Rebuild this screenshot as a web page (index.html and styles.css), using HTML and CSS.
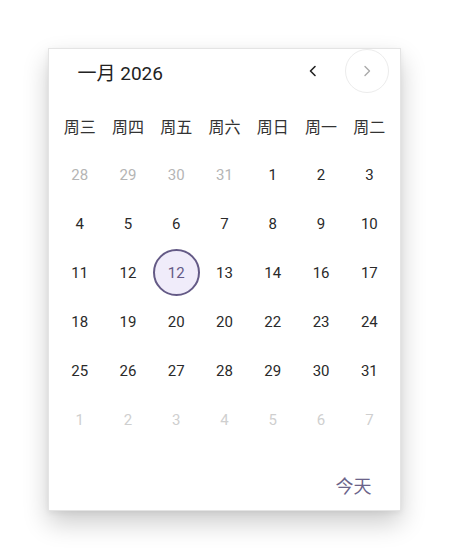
FILE: index.html
```html
<!DOCTYPE html>
<html lang="zh">
<head>
    <meta charset="UTF-8" />
    <meta name="viewport" content="width=device-width, initial-scale=1.0" />
    <title>日历</title>
    <link rel="stylesheet" href="styles.css">
</head>
<body>
    <div class="picker">
        <div class="header">
            <span class="title">一月 2026</span>
            <button class="nav prev" aria-label="上个月">
                <svg width="14" height="14" viewBox="0 0 14 14"><path d="M9 2.5 L4.5 7 L9 11.5" fill="none" stroke="#222" stroke-width="1.6" stroke-linecap="round" stroke-linejoin="round"/></svg>
            </button>
            <button class="nav next" aria-label="下个月">
                <svg width="14" height="14" viewBox="0 0 14 14"><path d="M5 2.5 L9.5 7 L5 11.5" fill="none" stroke="#aaa" stroke-width="1.4" stroke-linecap="round" stroke-linejoin="round"/></svg>
            </button>
        </div>

        <div class="weekdays">
            <span>周三</span><span>周四</span><span>周五</span><span>周六</span><span>周日</span><span>周一</span><span>周二</span>
        </div>

        <div class="days">
            <span class="other">28</span><span class="other">29</span><span class="other">30</span><span class="other">31</span><span>1</span><span>2</span><span>3</span>
            <span>4</span><span>5</span><span>6</span><span>7</span><span>8</span><span>9</span><span>10</span>
            <span>11</span><span>12</span><span class="selected">12</span><span>13</span><span>14</span><span>16</span><span>17</span>
            <span>18</span><span>19</span><span>20</span><span>20</span><span>22</span><span>23</span><span>24</span>
            <span>25</span><span>26</span><span>27</span><span>28</span><span>29</span><span>30</span><span>31</span>
            <span class="next-month">1</span><span class="next-month">2</span><span class="next-month">3</span><span class="next-month">4</span><span class="next-month">5</span><span class="next-month">6</span><span class="next-month">7</span>
        </div>

        <div class="footer">
            <button class="today">今天</button>
        </div>
    </div>
</body>
</html>
```

FILE: styles.css
```css
body {
    margin: 0;
    padding: 48px 0 0 48px;
    min-height: 560px;
    box-sizing: border-box;
    background: #fff;
    font-family: Roboto, "Noto Sans CJK SC", sans-serif;
    color: #222;
}
.picker {
    width: 353px;
    height: 463px;
    box-sizing: border-box;
    border: 1px solid #e4e4e4;
    background: #fff;
    box-shadow: 0 12px 24px rgba(0,0,0,0.2), 0 2px 6px rgba(0,0,0,0.06);
    padding: 0 6.5px;
    display: flex;
    flex-direction: column;
}
.header {
    display: flex;
    align-items: center;
    height: 48px;
    padding: 0 5px 4px 22px;
    box-sizing: border-box;
}
.title {
    flex: 1;
    font-size: 19px;
    color: #222;
}
.nav {
    width: 44px;
    height: 44px;
    flex-shrink: 0;
    border-radius: 50%;
    border: none;
    background: none;
    padding: 0;
    display: flex;
    align-items: center;
    justify-content: center;
}
.prev {
    margin-right: 10px;
}
.next {
    border: 1px solid #ececec;
}
.weekdays,
.days {
    display: grid;
    grid-template-columns: repeat(7, 1fr);
}
.weekdays {
    height: 48px;
    margin-top: 5px;
    align-items: center;
    font-size: 16px;
    color: #333;
    text-align: center;
}
.days {
    grid-auto-rows: 49px;
    font-size: 15px;
    color: #2a2a2a;
}
.days span {
    display: flex;
    align-items: center;
    justify-content: center;
}
.days .other { color: #b5b5b5; }
.days .next-month { color: #cfcfcf; }
.days .selected {
    width: 43px;
    height: 43px;
    justify-self: center;
    align-self: center;
    border: 2px solid #645a86;
    border-radius: 50%;
    background: #f0ecfa;
    color: #645a86;
}
.footer {
    flex: 1;
    display: flex;
    justify-content: flex-end;
    align-items: flex-start;
    padding: 22px 14px 0 0;
}
.today {
    border: none;
    background: none;
    padding: 6px 8px;
    font-family: "Noto Sans CJK SC", sans-serif;
    font-size: 18px;
    color: #6b6389;
}
```
